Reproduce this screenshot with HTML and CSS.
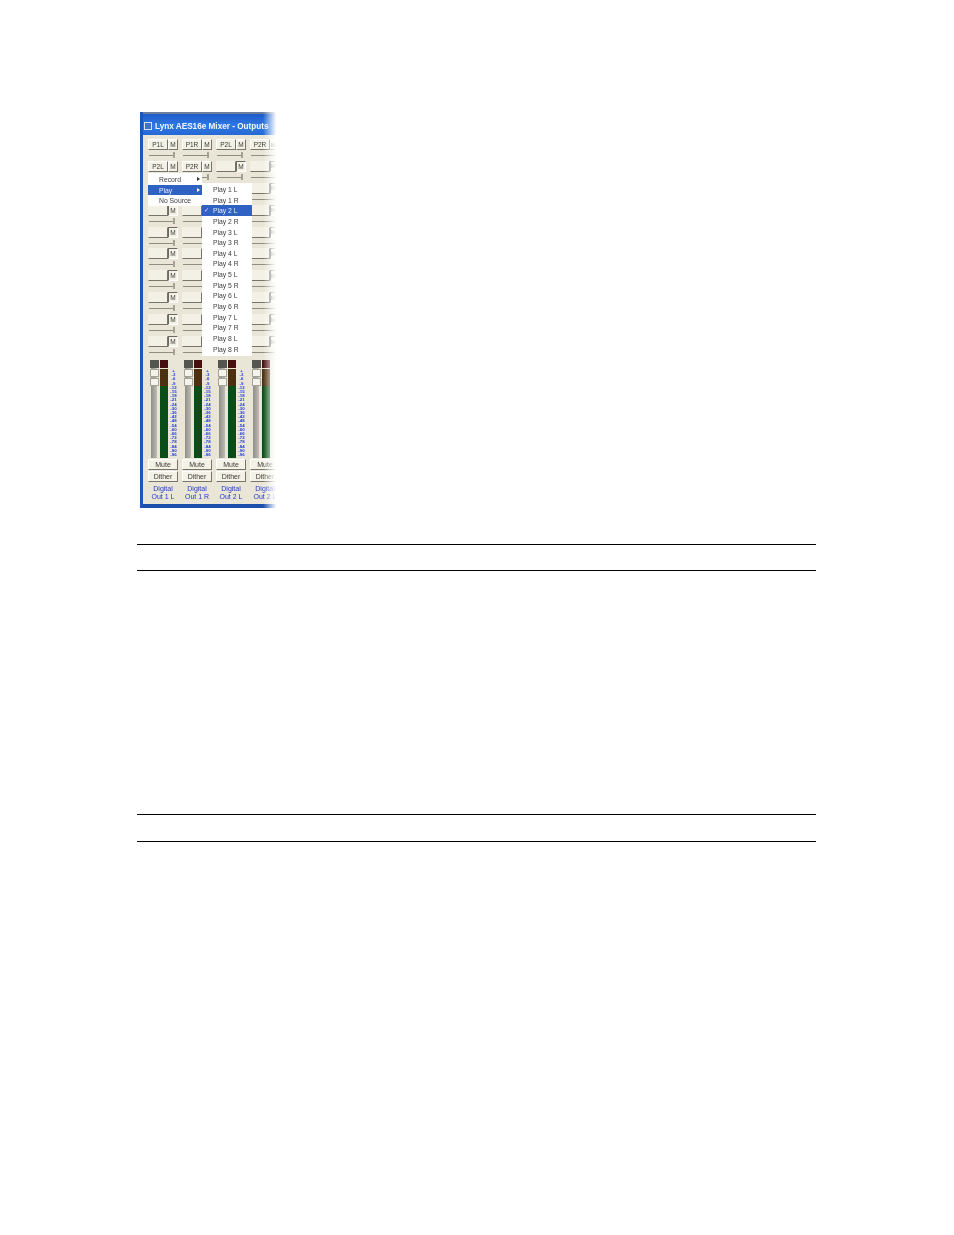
FILE: index.html
```html
<!DOCTYPE html>
<html lang="en">
<head>
    <meta charset="UTF-8">
    <meta name="viewport" content="width=device-width, initial-scale=1.0">
    <title>Lynx AES16e Mixer - Outputs</title>
    <link rel="stylesheet" href="styles.css">
</head>
<body>
    <div class="page">
        <div class="mixer">
            <div class="title-bar">
                <span class="title-icon"></span>
                <span class="title-text">Lynx AES16e Mixer - Outputs</span>
            </div>
            <div class="strips">
                <div class="strip">
                    <div class="route"><div class="src">P1L</div><div class="mute-small">M</div><div class="trim"></div></div>
                    <div class="route"><div class="src">P2L</div><div class="mute-small">M</div><div class="trim"></div></div>
                    <div class="route"><div class="src"></div><div class="mute-small"></div><div class="trim"></div></div>
                    <div class="route"><div class="src blank"></div><div class="mute-small on">M</div><div class="trim"></div></div>
                    <div class="route"><div class="src blank"></div><div class="mute-small on">M</div><div class="trim"></div></div>
                    <div class="route"><div class="src blank"></div><div class="mute-small on">M</div><div class="trim"></div></div>
                    <div class="route"><div class="src blank"></div><div class="mute-small on">M</div><div class="trim"></div></div>
                    <div class="route"><div class="src blank"></div><div class="mute-small on">M</div><div class="trim"></div></div>
                    <div class="route"><div class="src blank"></div><div class="mute-small on">M</div><div class="trim"></div></div>
                    <div class="route"><div class="src blank"></div><div class="mute-small on">M</div><div class="trim"></div></div>
                    <div class="levels">
                        <div class="fader"><div class="chip"></div><div class="thumb"></div><div class="thumb"></div></div>
                        <div class="meter"><div class="chip red"></div><div class="bar"></div></div>
                        <div class="scale">+<br>-3<br>-6<br>-9<br>-12<br>-15<br>-18<br>-21<br>-24<br>-30<br>-36<br>-42<br>-48<br>-54<br>-60<br>-66<br>-72<br>-78<br>-84<br>-90<br>-96</div>
                    </div>
                    <div class="wide-btn">Mute</div>
                    <div class="wide-btn">Dither</div>
                    <div class="strip-name">Digital<br>Out 1 L</div>
                </div>
                <div class="strip">
                    <div class="route"><div class="src">P1R</div><div class="mute-small">M</div><div class="trim"></div></div>
                    <div class="route"><div class="src">P2R</div><div class="mute-small">M</div><div class="trim"></div></div>
                    <div class="route"><div class="src blank"></div><div class="mute-small"></div><div class="trim"></div></div>
                    <div class="route"><div class="src blank"></div><div class="mute-small"></div><div class="trim"></div></div>
                    <div class="route"><div class="src blank"></div><div class="mute-small"></div><div class="trim"></div></div>
                    <div class="route"><div class="src blank"></div><div class="mute-small"></div><div class="trim"></div></div>
                    <div class="route"><div class="src blank"></div><div class="mute-small"></div><div class="trim"></div></div>
                    <div class="route"><div class="src blank"></div><div class="mute-small"></div><div class="trim"></div></div>
                    <div class="route"><div class="src blank"></div><div class="mute-small"></div><div class="trim"></div></div>
                    <div class="route"><div class="src blank"></div><div class="mute-small"></div><div class="trim"></div></div>
                    <div class="levels">
                        <div class="fader"><div class="chip"></div><div class="thumb"></div><div class="thumb"></div></div>
                        <div class="meter"><div class="chip red"></div><div class="bar"></div></div>
                        <div class="scale">+<br>-3<br>-6<br>-9<br>-12<br>-15<br>-18<br>-21<br>-24<br>-30<br>-36<br>-42<br>-48<br>-54<br>-60<br>-66<br>-72<br>-78<br>-84<br>-90<br>-96</div>
                    </div>
                    <div class="wide-btn">Mute</div>
                    <div class="wide-btn">Dither</div>
                    <div class="strip-name">Digital<br>Out 1 R</div>
                </div>
                <div class="strip">
                    <div class="route"><div class="src">P2L</div><div class="mute-small">M</div><div class="trim"></div></div>
                    <div class="route"><div class="src blank"></div><div class="mute-small on">M</div><div class="trim"></div></div>
                    <div class="route"><div class="src blank"></div><div class="mute-small"></div><div class="trim"></div></div>
                    <div class="route"><div class="src blank"></div><div class="mute-small"></div><div class="trim"></div></div>
                    <div class="route"><div class="src blank"></div><div class="mute-small"></div><div class="trim"></div></div>
                    <div class="route"><div class="src blank"></div><div class="mute-small"></div><div class="trim"></div></div>
                    <div class="route"><div class="src blank"></div><div class="mute-small"></div><div class="trim"></div></div>
                    <div class="route"><div class="src blank"></div><div class="mute-small"></div><div class="trim"></div></div>
                    <div class="route"><div class="src blank"></div><div class="mute-small"></div><div class="trim"></div></div>
                    <div class="route"><div class="src blank"></div><div class="mute-small"></div><div class="trim"></div></div>
                    <div class="levels">
                        <div class="fader"><div class="chip"></div><div class="thumb"></div><div class="thumb"></div></div>
                        <div class="meter"><div class="chip red"></div><div class="bar"></div></div>
                        <div class="scale">+<br>-3<br>-6<br>-9<br>-12<br>-15<br>-18<br>-21<br>-24<br>-30<br>-36<br>-42<br>-48<br>-54<br>-60<br>-66<br>-72<br>-78<br>-84<br>-90<br>-96</div>
                    </div>
                    <div class="wide-btn">Mute</div>
                    <div class="wide-btn">Dither</div>
                    <div class="strip-name">Digital<br>Out 2 L</div>
                </div>
                <div class="strip">
                    <div class="route"><div class="src">P2R</div><div class="mute-small cut">M</div><div class="trim"></div></div>
                    <div class="route"><div class="src blank"></div><div class="mute-small on cut">M</div><div class="trim"></div></div>
                    <div class="route"><div class="src blank"></div><div class="mute-small on cut">M</div><div class="trim"></div></div>
                    <div class="route"><div class="src blank"></div><div class="mute-small on cut">M</div><div class="trim"></div></div>
                    <div class="route"><div class="src blank"></div><div class="mute-small on cut">M</div><div class="trim"></div></div>
                    <div class="route"><div class="src blank"></div><div class="mute-small on cut">M</div><div class="trim"></div></div>
                    <div class="route"><div class="src blank"></div><div class="mute-small on cut">M</div><div class="trim"></div></div>
                    <div class="route"><div class="src blank"></div><div class="mute-small on cut">M</div><div class="trim"></div></div>
                    <div class="route"><div class="src blank"></div><div class="mute-small on cut">M</div><div class="trim"></div></div>
                    <div class="route"><div class="src blank"></div><div class="mute-small on cut">M</div><div class="trim"></div></div>
                    <div class="levels">
                        <div class="fader"><div class="chip"></div><div class="thumb"></div><div class="thumb"></div></div>
                        <div class="meter"><div class="chip red"></div><div class="bar"></div></div>
                    </div>
                    <div class="wide-btn">Mute</div>
                    <div class="wide-btn">Dither</div>
                    <div class="strip-name">Digital<br>Out 2 L</div>
                </div>
            </div>

            <div class="menu source-menu">
                <div class="menu-item">Record<span class="arrow"></span></div>
                <div class="menu-item selected">Play<span class="arrow"></span></div>
                <div class="menu-item">No Source</div>
            </div>
            <div class="menu play-menu">
                <div class="menu-item">Play 1 L</div>
                <div class="menu-item">Play 1 R</div>
                <div class="menu-item selected"><span class="check">&#10003;</span>Play 2 L</div>
                <div class="menu-item">Play 2 R</div>
                <div class="menu-item">Play 3 L</div>
                <div class="menu-item">Play 3 R</div>
                <div class="menu-item">Play 4 L</div>
                <div class="menu-item">Play 4 R</div>
                <div class="menu-item">Play 5 L</div>
                <div class="menu-item">Play 5 R</div>
                <div class="menu-item">Play 6 L</div>
                <div class="menu-item">Play 6 R</div>
                <div class="menu-item">Play 7 L</div>
                <div class="menu-item">Play 7 R</div>
                <div class="menu-item">Play 8 L</div>
                <div class="menu-item">Play 8 R</div>
            </div>
            <div class="edge-fade"></div>
        </div>

        <div class="rule-pair first-pair"></div>
        <div class="rule-pair second-pair"></div>
    </div>
</body>
</html>
```

FILE: styles.css
```css
body {
    margin: 0;
    padding: 0;
    background-color: #ffffff;
    font-family: "Liberation Sans", Arial, sans-serif;
}
.page {
    padding: 112px 138px 0 137px;
}

/* mixer window */
.mixer {
    position: relative;
    width: 137px;
    height: 396px;
    margin-left: 3px;
    box-sizing: border-box;
    overflow: hidden;
    background-color: #e9e6d8;
    border-left: 3px solid #1d57bd;
    box-shadow: inset 0 -4px 0 #1a4fae;
    filter: blur(0.5px);
}
.title-bar {
    display: flex;
    align-items: center;
    gap: 3px;
    height: 23px;
    padding: 3px 0 0 1px;
    box-sizing: border-box;
    border-top: 2px solid #6d7f9c;
    background: linear-gradient(to bottom, #1c5cc8, #2f78e6 55%, #2468d4);
}
.title-icon {
    width: 6px;
    height: 6px;
    border: 1px solid #d5e0f2;
    background-color: #3f74c4;
}
.title-text {
    color: #f2f6fc;
    font-size: 8.2px;
    font-weight: bold;
    white-space: nowrap;
}
.strips {
    display: flex;
    gap: 4px;
    padding: 4px 0 0 5px;
}
.strip {
    flex: 0 0 30px;
    min-width: 0;
    display: flex;
    flex-direction: column;
}

/* routing rows */
.route {
    display: grid;
    grid-template-columns: 20px 10px;
    grid-template-rows: 11px 10.9px;
}
.src, .mute-small {
    box-sizing: border-box;
    display: flex;
    align-items: center;
    justify-content: center;
    font-size: 6.5px;
    color: #3a3a36;
    background-color: #f3f1e6;
    border: 1px solid #77756a;
    border-top-color: #ffffff;
    border-left-color: #ffffff;
}
.src.blank {
    border-color: transparent #77756a #77756a transparent;
}
.mute-small.on {
    border-color: #6c6a60 #ffffff #ffffff #6c6a60;
}
.mute-small.cut {
    justify-content: flex-start;
    font-size: 5.5px;
}
.trim {
    grid-column: 1 / 3;
    position: relative;
}
.trim::before {
    content: "";
    position: absolute;
    left: 1px;
    right: 5px;
    top: 5px;
    height: 1px;
    background-color: #8f8d80;
}
.trim::after {
    content: "";
    position: absolute;
    right: 3px;
    top: 2px;
    width: 2px;
    height: 6px;
    background-color: #a3a194;
}

/* fader and meter */
.levels {
    display: flex;
    gap: 1px;
    height: 98px;
    margin: 2px 0 1px 1px;
}
.fader {
    flex: none;
    width: 10px;
    display: flex;
    flex-direction: column;
    align-items: center;
    gap: 1px;
    background: linear-gradient(to right, transparent 2px, #8f8f88 2px, #bdbdb6 8px, transparent 8px);
}
.chip {
    flex: none;
    width: 9px;
    height: 8px;
    background-color: #55554f;
}
.chip.red {
    width: 8px;
    background-color: #471010;
}
.thumb {
    flex: none;
    width: 9px;
    height: 8px;
    box-sizing: border-box;
    background-color: #f4f3ec;
    border: 1px solid #a5a398;
}
.meter {
    flex: none;
    width: 8px;
    display: flex;
    flex-direction: column;
    gap: 1px;
}
.bar {
    flex: 1;
    background: linear-gradient(to bottom, #4c3010 17px, #0b4d18 17px);
}
.scale {
    flex: none;
    width: 9px;
    padding-top: 9px;
    color: #1f35e0;
    font-size: 4.4px;
    font-weight: bold;
    line-height: 4.2px;
    text-align: center;
    white-space: nowrap;
}
.wide-btn {
    box-sizing: border-box;
    height: 11px;
    margin-bottom: 1px;
    display: flex;
    align-items: center;
    justify-content: center;
    color: #3a3a36;
    font-size: 7px;
    background-color: #f4f2e6;
    border: 1px solid #77756a;
    border-top-color: #ffffff;
    border-left-color: #ffffff;
}
.strip-name {
    margin-top: 2px;
    color: #2337c6;
    font-size: 7px;
    line-height: 8.5px;
    text-align: center;
    white-space: nowrap;
}

/* popup menus */
.menu {
    position: absolute;
    box-sizing: border-box;
    background-color: #ffffff;
    font-size: 6.8px;
    color: #3c3c3c;
}
.source-menu {
    left: 5px;
    top: 61px;
    width: 54px;
    padding-top: 1px;
}
.play-menu {
    left: 59px;
    top: 71px;
    width: 50px;
    height: 173px;
    padding-top: 1px;
}
.menu-item {
    position: relative;
    height: 10.65px;
    line-height: 11.5px;
    padding-left: 11px;
    white-space: nowrap;
}
.selected {
    background-color: #2f62c2;
    color: #e8eefb;
}
.check {
    position: absolute;
    left: 2px;
    font-size: 6px;
}
.arrow {
    position: absolute;
    right: 2px;
    top: 3px;
    border-left: 3px solid #333333;
    border-top: 2px solid transparent;
    border-bottom: 2px solid transparent;
}
.selected .arrow {
    border-left-color: #ffffff;
}
.edge-fade {
    position: absolute;
    top: 0;
    right: 0;
    bottom: 0;
    width: 14px;
    background: linear-gradient(to right, rgba(255,255,255,0), #ffffff 95%);
}

/* horizontal rules below the figure */
.rule-pair {
    border-top: 1px solid #000000;
    border-bottom: 1px solid #000000;
}
.first-pair {
    height: 25px;
    margin-top: 36px;
}
.second-pair {
    height: 26px;
    margin-top: 243px;
}
```
